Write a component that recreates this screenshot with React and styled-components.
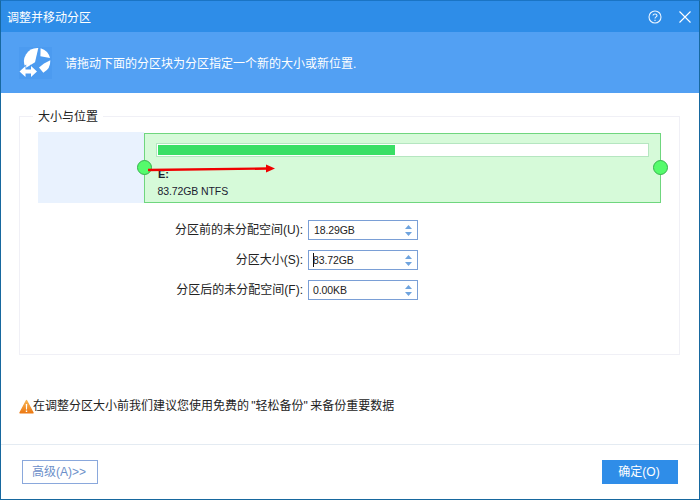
import React from "react";
import styled, { createGlobalStyle } from "styled-components";

const Global = createGlobalStyle`
  html, body { margin: 0; padding: 0; background: #fff; }
  body { font-family: "Liberation Sans", "Noto Sans CJK SC", sans-serif; font-size: 12px; color: #1a1a1a; }
  * { box-sizing: border-box; }
`;

const Window = styled.div`
  width: 700px; height: 500px; display: flex; flex-direction: column;
  border: 1px solid #17689f; border-top-color: #1a74c4; background: #fff;
`;
const TitleBar = styled.div`
  height: 31px; flex: none; background: #2e8de8; color: #fff; display: flex; align-items: center;
  padding: 0 6px; font-size: 12px; justify-content: space-between;
`;
const TitleIcons = styled.div`display: flex; align-items: center; gap: 17px; padding-right: 2px;`;
const Banner = styled.div`
  height: 61px; flex: none; background: #52a0f3; color: #fff; display: flex; align-items: center;
  padding: 0 0 0 18px; gap: 13px; font-size: 12px;
`;
const Body = styled.div`flex: 1; padding: 23px 19px 0 18px; display: flex; flex-direction: column;`;
const Group = styled.div`
  position: relative; height: 239px; border: 1px solid #f0f0f6; padding: 15px 17px 0 18px;
`;
const Legend = styled.div`
  position: absolute; left: 13px; top: -8px; background: #fff; padding: 0 5px; font-size: 12px; line-height: 16px; color: #222;
`;
const Track = styled.div`position: relative; height: 71px; display: flex; align-items: flex-end;`;
const Unallocated = styled.div`width: 106px; height: 71px; background: #e9f2fe;`;
const Partition = styled.div`
  width: 517px; height: 70px; background: #d6fad9; border: 1px solid #6fd67e; padding: 9px 11px 0 11px;
`;
const UsageBar = styled.div`
  height: 14px; border: 1px solid #b5e6c0; background: #fff; padding: 1px; display: flex;
`;
const UsageFill = styled.div`background: #3adf66; height: 100%;`;
const DriveName = styled.div`font-weight: bold; font-size: 11px; line-height: 13px; margin-top: 11px; padding-left: 2px; color: #1a2030;`;
const DriveInfo = styled.div`font-size: 10.5px; letter-spacing: -0.1px; line-height: 14px; margin-top: 3px; padding-left: 1.5px; color: #1a2030;`;
const Handle = styled.div`
  position: absolute; top: 28px; left: ${p => p.$left}px; width: 15px; height: 15px; border-radius: 50%;
  background: #55fb6c; border: 1px solid #35b34c;
`;
const Arrow = styled.svg`position: absolute; left: 110px; top: 32px; width: 135px; height: 12px;`;
const Form = styled.div`display: grid; grid-template-columns: 265px 110px; column-gap: 5px; row-gap: 10px; margin-top: 17px; align-items: center;`;
const Label = styled.div`text-align: right; font-size: 12px; color: #222; white-space: nowrap; padding-bottom: 3px;`;
const Spin = styled.div`
  height: 20px; border: 1px solid #7a9fd6; display: flex; align-items: center; justify-content: space-between;
  padding: 0 5px 0 ${p => p.$pad}px; font-size: 10.5px; letter-spacing: -0.1px; color: #222; background: #fff; position: relative;
`;
const Caret = styled.span`position: absolute; left: 4px; top: 2px; width: 1px; height: 14px; background: #111;`;
const Arrows = styled.svg`width: 7px; height: 13px; flex: none;`;
const Warning = styled.div`
  display: flex; align-items: center; margin-top: 43px; font-size: 12px; color: #222; line-height: 16px; white-space: nowrap; word-spacing: -1px;
`;
const WarningIcon = styled.svg`width: 15px; height: 15px; flex: none; margin-right: -1px;`;
const Footer = styled.div`
  height: 55px; flex: none; border-top: 1px solid #e4ebf2; display: flex; justify-content: space-between; align-items: flex-start;
  padding: 15px 21px 0 21px;
`;
const Advanced = styled.button`
  width: 76px; height: 24px; background: #fff; border: 1px solid #8aa8dc; color: #6c8fc9; font: inherit; padding: 0 2px 3px 0;
`;
const Ok = styled.button`
  width: 76px; height: 24px; background: #2f8de8; border: none; color: #fff; font: inherit; padding: 0 2px 3px 0;
`;

const SpinArrows = () => (
  <Arrows viewBox="0 0 7 13">
    <path d="M3.5 1 L7 5 H0 Z" fill="#6fa3de" />
    <path d="M0 8 H7 L3.5 12 Z" fill="#6fa3de" />
  </Arrows>
);

const rows = [
  { label: "分区前的未分配空间(U):", value: "18.29GB", pad: 5 },
  { label: "分区大小(S):", value: "83.72GB", pad: 4, caret: true },
  { label: "分区后的未分配空间(F):", value: "0.00KB", pad: 4 },
];

export default function App() {
  return (
    <>
      <Global />
      <Window>
        <TitleBar>
          <span>调整并移动分区</span>
          <TitleIcons>
            <svg width="14" height="14" viewBox="0 0 14 14" fill="none" stroke="#e8f3ff" strokeWidth="1.1">
              <circle cx="7" cy="7" r="6" />
              <path d="M5 5.5 C5 3.4 9 3.4 9 5.5 C9 7 7 6.8 7 8.6" />
              <path d="M7 9.7 V11" />
            </svg>
            <svg width="12" height="12" viewBox="0 0 12 12" stroke="#fff" strokeWidth="1.1">
              <path d="M0.5 0.5 L11.5 11.5 M11.5 0.5 L0.5 11.5" />
            </svg>
          </TitleIcons>
        </TitleBar>
        <Banner>
          <svg width="33" height="32" viewBox="0 0 33 32">
            <rect width="33" height="32" fill="#4c9bf0" />
            <path d="M19.3 1 L16 15.3 L6.7 21 A13.5 13.5 0 0 1 19.3 1 Z" fill="#fff" />
            <path d="M21.6 1.2 A13.5 13.5 0 0 1 31 11 L21.4 9.3 Z" fill="#fff" />
            <path d="M31.3 13.3 A13.5 13.5 0 0 1 24.3 25.8 L20 20.5 L25 16.5 Z" fill="#fff" />
            <path
              d="M0.5 24.5 L6.5 19 V22.5 H12 V19 L18 24.5 L12 30 V26.5 H6.5 V30 Z"
              fill="#fff"
              stroke="#4c9bf0"
              strokeWidth="1.4"
              paintOrder="stroke"
            />
          </svg>
          <span>请拖动下面的分区块为分区指定一个新的大小或新位置.</span>
        </Banner>
        <Body>
          <Group>
            <Legend>大小与位置</Legend>
            <Track>
              <Unallocated />
              <Partition>
                <UsageBar>
                  <UsageFill style={{ width: "48.4%" }} />
                </UsageBar>
                <DriveName>E:</DriveName>
                <DriveInfo>83.72GB NTFS</DriveInfo>
              </Partition>
              <Handle $left={99} />
              <Handle $left={615} />
              <Arrow viewBox="0 0 135 12">
                <path d="M0 6 L120 4.5" stroke="#f00000" strokeWidth="2.4" />
                <path d="M118 0.5 L127 4.5 L118 8.5 Z" fill="#f00000" />
              </Arrow>
            </Track>
            <Form>
              {rows.map(r => (
                <React.Fragment key={r.label}>
                  <Label>{r.label}</Label>
                  <Spin $pad={r.pad}>
                    {r.caret && <Caret />}
                    <span>{r.value}</span>
                    <SpinArrows />
                  </Spin>
                </React.Fragment>
              ))}
            </Form>
          </Group>
          <Warning>
            <WarningIcon viewBox="0 0 15 15">
              <defs>
                <linearGradient id="w" x1="0" y1="0" x2="0" y2="1">
                  <stop offset="0" stopColor="#f8b452" />
                  <stop offset="1" stopColor="#ec7a14" />
                </linearGradient>
              </defs>
              <path d="M7.5 1.5 L14 13.8 H1 Z" fill="url(#w)" stroke="url(#w)" strokeWidth="1.4" strokeLinejoin="round" />
              <path d="M6.8 5 H8.2 L8 10.5 H7 Z M6.8 11.5 H8.2 V13 H6.8 Z" fill="#fff" />
            </WarningIcon>
            <span>在调整分区大小前我们建议您使用免费的 "轻松备份" 来备份重要数据</span>
          </Warning>
        </Body>
        <Footer>
          <Advanced>高级(A)&gt;&gt;</Advanced>
          <Ok>确定(O)</Ok>
        </Footer>
      </Window>
    </>
  );
}
